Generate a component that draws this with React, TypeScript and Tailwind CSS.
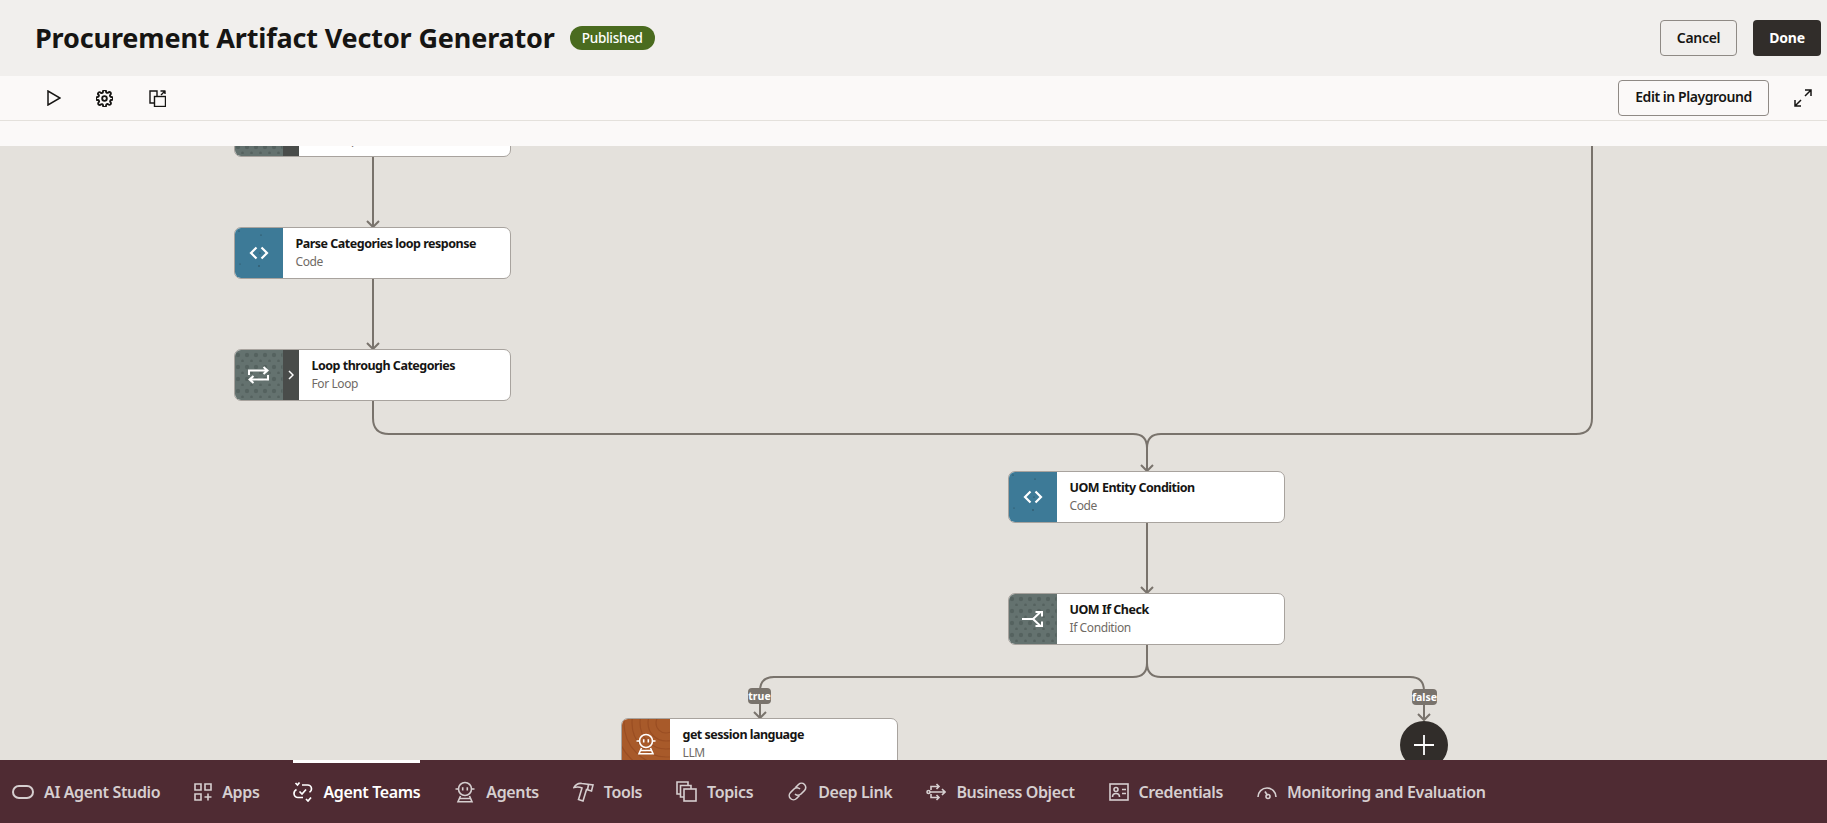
import { type ReactNode } from "react";

const font = "font-['Noto_Sans',sans-serif]";

function DotTexture({ id, color }: { id: string; color: string }) {
  return (
    <svg className="absolute inset-0 h-full w-full" aria-hidden="true">
      <defs>
        <pattern id={id} width="9" height="12" patternUnits="userSpaceOnUse">
          <circle cx="3" cy="5" r="2.2" fill={color} />
          <circle cx="7.5" cy="11" r="1.4" fill={color} />
        </pattern>
      </defs>
      <rect width="100%" height="100%" fill={`url(#${id})`} />
    </svg>
  );
}

function WoodTexture() {
  return (
    <svg className="absolute inset-0 h-full w-full" aria-hidden="true" fill="none" stroke="#9a4e23" strokeWidth="1.2">
      <circle cx="44" cy="4" r="10" />
      <circle cx="44" cy="4" r="18" />
      <circle cx="44" cy="4" r="26" />
      <circle cx="44" cy="4" r="34" />
      <circle cx="44" cy="4" r="42" />
      <circle cx="44" cy="4" r="50" />
      <circle cx="44" cy="4" r="58" />
    </svg>
  );
}

function Specks() {
  return (
    <svg className="absolute inset-0 h-full w-full" aria-hidden="true" fill="#28404c">
      <circle cx="4" cy="3" r="0.6" />
      <circle cx="26" cy="7" r="0.6" />
      <circle cx="24" cy="38" r="0.7" />
      <circle cx="25" cy="25" r="0.6" />
      <circle cx="5" cy="36" r="0.5" />
    </svg>
  );
}

function CodeIcon() {
  return (
    <svg width="20" height="14" viewBox="0 0 20 14" fill="none" stroke="#fff" strokeWidth="2.2" className="relative">
      <path d="M7.500 1.500 2 7l5.500 5.500M12.500 1.500 18 7l-5.500 5.500" />
    </svg>
  );
}

function LoopIcon() {
  return (
    <svg width="21" height="18" viewBox="0 0 21 18" fill="none" stroke="#fff" strokeWidth="2" className="relative">
      <path d="M1 9V4.500h18M15.500 1 19.500 4.500 15.500 8M20 9v4.500H2M5.500 10 1.500 13.500 5.500 17" />
    </svg>
  );
}

function IfIcon() {
  return (
    <svg width="21" height="16" viewBox="0 0 21 16" fill="none" stroke="#fff" strokeWidth="2" className="relative">
      <path d="M0 8h11l7-6.500M11 8l7 6.500M13.500 1H20v4.500M20 10.500V15h-6.500" />
    </svg>
  );
}

function AgentIcon({ size = 22, color = "#fff" }: { size?: number; color?: string }) {
  return (
    <svg width={size} height={size} viewBox="0 0 22 22" fill="none" stroke={color} strokeWidth="1.600" className="relative">
      <circle cx="11" cy="8" r="6.500" />
      <path d="M1.500 8h3M17.500 8h3" />
      <path d="M8.700 6.200v3.300M13.300 6.200v3.300" />
      <path d="M6.500 15 4 20.800h14L15.500 15M6 17.500h10" />
    </svg>
  );
}

function NodeCard({
  title,
  kind,
  block,
  icon,
  chevron,
  className,
}: {
  title: string;
  kind: string;
  block: string;
  icon: ReactNode;
  chevron?: boolean;
  className: string;
}) {
  return (
    <div className={`absolute flex h-[52px] w-[277px] overflow-hidden rounded-[7px] border-[1.5px] border-[#a8a39e] bg-white ${className}`}>
      <div className={`relative flex w-[47.500px] shrink-0 items-center justify-center overflow-hidden ${block}`}>{icon}</div>
      {chevron && (
        <div className="flex w-[16px] shrink-0 items-center justify-center bg-[#494c4a]">
          <svg width="6" height="10" viewBox="0 0 6 10" fill="none" stroke="#fff" strokeWidth="1.5">
            <path d="m1 1 4 4-4 4" />
          </svg>
        </div>
      )}
      <div className="flex min-w-0 flex-col justify-center pl-[13px]">
        <div className="text-[12.500px] leading-[18px] font-bold tracking-[-0.5px] whitespace-nowrap text-[#161513]">{title}</div>
        <div className="text-[12px] leading-[18px] tracking-[-0.4px] whitespace-nowrap text-[#6f6a65]">{kind}</div>
      </div>
    </div>
  );
}

function Connectors() {
  const stroke = "#79736c";
  return (
    <svg className="absolute top-0 left-0 h-[614px] w-[1827px]" fill="none" stroke={stroke} strokeWidth="2">
      <path d="M373 11V81M367 75l6 6 6-6" />
      <path d="M373 133V203M367 197l6 6 6-6" />
      <path d="M373 255V272Q373 288 389 288H1133Q1147 288 1147 302V325M1141 319l6 6 6-6" />
      <path d="M1592 0V272Q1592 288 1576 288H1161Q1147 288 1147 302" />
      <path d="M1147 377V447M1141 441l6 6 6-6" />
      <path d="M1147 499V517Q1147 531 1133 531H774Q760 531 760 545V572M754 566l6 6 6-6" />
      <path d="M1147 517Q1147 531 1161 531H1410Q1424 531 1424 545V574M1418 568l6 6 6-6" />
    </svg>
  );
}

function EdgeChip({ label, className }: { label: string; className: string }) {
  return (
    <div className={`absolute flex h-[16px] items-center justify-center rounded-[4px] bg-[#79736c] text-[10.500px] leading-none font-bold text-white ${className}`}>
      {label}
    </div>
  );
}

const navItems: { label: string; active?: boolean; icon: ReactNode }[] = [
  {
    label: "AI Agent Studio",
    icon: (
      <svg width="22" height="14" viewBox="0 0 22 14" fill="none" stroke="currentColor" strokeWidth="2">
        <rect x="1" y="1" width="20" height="12" rx="6" />
      </svg>
    ),
  },
  {
    label: "Apps",
    icon: (
      <svg width="18" height="18" viewBox="0 0 18 18" fill="none" stroke="currentColor" strokeWidth="1.6">
        <path d="M1 1h6v6H1zM11 1h6v6h-6zM1 11h6v6H1zM14 10.500v7M10.500 14h7" />
      </svg>
    ),
  },
  {
    label: "Agent Teams",
    active: true,
    icon: (
      <svg width="20" height="20" viewBox="0 0 20 20" fill="none" stroke="currentColor" strokeWidth="1.7">
        <path d="M2.500 1 4.500 3 6.500 0.500M9 3h5.500a4 4 0 0 1 4 4c0 1.500-.7 2.600-2 3.300M3.500 7.500C2 8.300 1 9.500 1 11.500a4 4 0 0 0 4 4h5" />
        <path d="m6.500 9.500 2.500 2.500 4-4.500M13 17l2 2 3-3.500" />
      </svg>
    ),
  },
  { label: "Agents", icon: <AgentIcon color="currentColor" /> },
  {
    label: "Tools",
    icon: (
      <svg width="21" height="20" viewBox="0 0 21 20" fill="none" stroke="currentColor" strokeWidth="1.6">
        <path d="M1 5.500C3 2 6 1 9 1.500l11 1.500-1.500 6-5-1.500-3.500 11.500-4.500-1.500L9 6C6.500 4.800 3.500 4.800 1 5.500Z" />
        <path d="M15.500 2.500 14.500 8" />
      </svg>
    ),
  },
  {
    label: "Topics",
    icon: (
      <svg width="21" height="21" viewBox="0 0 21 21" fill="none" stroke="currentColor" strokeWidth="1.6">
        <path d="M5 13H1V1h11v4" />
        <path d="M8 16H4.500V4.500H15V8" />
        <rect x="8" y="8" width="12" height="12" />
      </svg>
    ),
  },
  {
    label: "Deep Link",
    icon: (
      <svg width="21" height="21" viewBox="0 0 21 21" fill="none" stroke="currentColor" strokeWidth="1.6">
        <path d="M8.500 6.500 11.500 3.500a4.200 4.200 0 0 1 6 6l-3.500 3.500a4.200 4.200 0 0 1-6 0" />
        <path d="M12.500 14.500 9.500 17.500a4.200 4.200 0 0 1-6-6L7 8a4.200 4.200 0 0 1 6 0" />
      </svg>
    ),
  },
  {
    label: "Business Object",
    icon: (
      <svg width="20" height="20" viewBox="0 0 20 20" fill="none" stroke="currentColor" strokeWidth="1.6">
        <path d="M4 10h15M16 7l3 3-3 3M5 8V4.500h8M10.500 2 13 4.500 10.500 7M5 12v3.500h8M10.500 13l2.500 2.500-2.500 2.500" />
        <circle cx="2.500" cy="10" r="1.500" />
      </svg>
    ),
  },
  {
    label: "Credentials",
    icon: (
      <svg width="20" height="18" viewBox="0 0 20 18" fill="none" stroke="currentColor" strokeWidth="1.6">
        <rect x="1" y="1" width="18" height="16" />
        <circle cx="7" cy="6.500" r="2" />
        <path d="M3.500 14c0-2.500 1.500-3.500 3.500-3.500s3.500 1 3.500 3.500M13 6.500h4M13 10.500h4" />
      </svg>
    ),
  },
  {
    label: "Monitoring and Evaluation",
    icon: (
      <svg width="20" height="16" viewBox="0 0 20 16" fill="none" stroke="currentColor" strokeWidth="1.6">
        <path d="M1 13a9 9 0 0 1 18 0" />
        <path d="M8 7.500l2.500 4" />
        <circle cx="11" cy="12.500" r="2" />
      </svg>
    ),
  },
];

export default function App() {
  return (
    <div className={`flex h-screen w-full flex-col overflow-hidden bg-[#e4e1dc] ${font}`}>
      <header className="flex h-[76px] shrink-0 items-center bg-[#f1efed] pr-[6px] pl-[35px]">
        <h1 className="pb-[2px] text-[27px] leading-none font-bold tracking-[-0.15px] whitespace-nowrap text-[#161513]">
          Procurement Artifact Vector Generator
        </h1>
        <span className="ml-[15px] flex h-[24px] w-[85px] items-center justify-center rounded-full bg-[#4a6b1f] text-[13.500px] font-medium tracking-[-0.3px] text-white">
          Published
        </span>
        <div className="ml-auto flex gap-[16px]">
          <button className="h-[36px] w-[77px] rounded-[4px] border border-[#8f8a85] pb-[2px] text-[14px] font-semibold tracking-[-0.3px] text-[#161513]">Cancel</button>
          <button className="h-[36px] w-[68px] rounded-[4px] bg-[#312d2a] pb-[2px] text-[14px] font-bold tracking-[-0.2px] text-white">Done</button>
        </div>
      </header>

      <div className="flex h-[45px] shrink-0 items-center border-b border-[#e4e1dc] bg-[#fbf9f8] pr-[15px] pl-[47px]">
        <svg width="14" height="16" viewBox="0 0 14 16" fill="none" stroke="#161513" strokeWidth="1.500">
          <path d="M1 1v14l12-7Z" />
        </svg>
        <svg className="ml-[35px]" width="17" height="17" viewBox="1 1 22 22" fill="none" stroke="#161513" strokeWidth="2.400">
          <circle cx="12" cy="12" r="3" />
          <path d="M19.400 15a1.650 1.650 0 0 0 .33 1.820l.06.06a2 2 0 1 1-2.830 2.830l-.06-.06a1.650 1.650 0 0 0-2.820 1.170V21a2 2 0 1 1-4 0v-.09a1.650 1.650 0 0 0-2.820-1.170l-.06.06a2 2 0 1 1-2.830-2.830l.06-.06A1.650 1.650 0 0 0 3.090 14H3a2 2 0 1 1 0-4h.09a1.650 1.650 0 0 0 1.170-2.820l-.06-.06a2 2 0 1 1 2.830-2.830l.06.06A1.650 1.650 0 0 0 10 3.090V3a2 2 0 1 1 4 0v.09a1.650 1.650 0 0 0 2.820 1.170l.06-.06a2 2 0 1 1 2.830 2.830l-.06.06A1.650 1.650 0 0 0 20.910 10H21a2 2 0 1 1 0 4h-.09a1.650 1.650 0 0 0-1.510 1Z" />
        </svg>
        <svg className="ml-[36px]" width="17" height="17" viewBox="0 0 17 17" fill="none" stroke="#161513" strokeWidth="1.400">
          <path d="M5.500 13H1V1h7v5.500" />
          <rect x="5.500" y="6.500" width="11" height="10" />
          <path d="M11.500 1h5M16 1v3M12 5l3.500-3.500" />
        </svg>
        <button className="ml-auto h-[36px] w-[151px] rounded-[4px] border border-[#8f8a85] pb-[3px] text-[14px] font-semibold tracking-[-0.45px] text-[#161513]">
          Edit in Playground
        </button>
        <svg className="ml-[25px]" width="18" height="18" viewBox="0 0 18 18" fill="none" stroke="#161513" strokeWidth="1.500">
          <path d="M1 17 7 11M1 11v6h6M17 1l-6 6M11 1h6v6" />
        </svg>
      </div>

      <div className="h-[25px] shrink-0 bg-[#fbf9f8]" />

      <main className="relative flex-1 overflow-hidden">
        <Connectors />
        <NodeCard
          title={"\u00a0"}
          kind="For Loop"
          block="bg-[#64726f]"
          chevron
          icon={<DotTexture id="top-dots" color="#55625f" />}
          className="top-[-41px] left-[234px]"
        />
        <NodeCard
          title="Parse Categories loop response"
          kind="Code"
          block="bg-[#3d7a97]"
          icon={
            <>
              <Specks />
              <CodeIcon />
            </>
          }
          className="top-[81px] left-[234px]"
        />
        <NodeCard
          title="Loop through Categories"
          kind="For Loop"
          block="bg-[#64726f]"
          chevron
          icon={
            <>
              <DotTexture id="loop-dots" color="#55625f" />
              <LoopIcon />
            </>
          }
          className="top-[203px] left-[234px]"
        />
        <NodeCard
          title="UOM Entity Condition"
          kind="Code"
          block="bg-[#3d7a97]"
          icon={
            <>
              <Specks />
              <CodeIcon />
            </>
          }
          className="top-[325px] left-[1008px]"
        />
        <NodeCard
          title="UOM If Check"
          kind="If Condition"
          block="bg-[#64726f]"
          icon={
            <>
              <DotTexture id="if-dots" color="#55625f" />
              <IfIcon />
            </>
          }
          className="top-[447px] left-[1008px]"
        />
        <NodeCard
          title="get session language"
          kind="LLM"
          block="bg-[#a85a2a]"
          icon={
            <>
              <WoodTexture />
              <AgentIcon />
            </>
          }
          className="top-[572px] left-[621px]"
        />
        <EdgeChip label="true" className="top-[542px] left-[748px] w-[23px]" />
        <EdgeChip label="false" className="top-[543px] left-[1412px] w-[25px]" />
        <div className="absolute top-[574.500px] left-[1400px] flex h-[48px] w-[48px] items-center justify-center rounded-full bg-[#312d2a]">
          <svg width="22" height="22" viewBox="0 0 22 22" stroke="#fff" strokeWidth="1.800">
            <path d="M11 1v20M1 11h20" />
          </svg>
        </div>
      </main>

      <nav className="relative z-10 flex h-[63px] shrink-0 gap-[34px] bg-[#4f2b33] pl-[12px]">
        {navItems.map((item) => (
          <div
            key={item.label}
            className={`flex h-full items-center gap-[10px] border-t-[3px] pb-[3px] text-[16px] font-semibold tracking-[-0.37px] whitespace-nowrap ${
              item.active ? "border-white text-white" : "border-transparent text-[#d6cfd0]"
            }`}
          >
            {item.icon}
            <span>{item.label}</span>
          </div>
        ))}
      </nav>
    </div>
  );
}
